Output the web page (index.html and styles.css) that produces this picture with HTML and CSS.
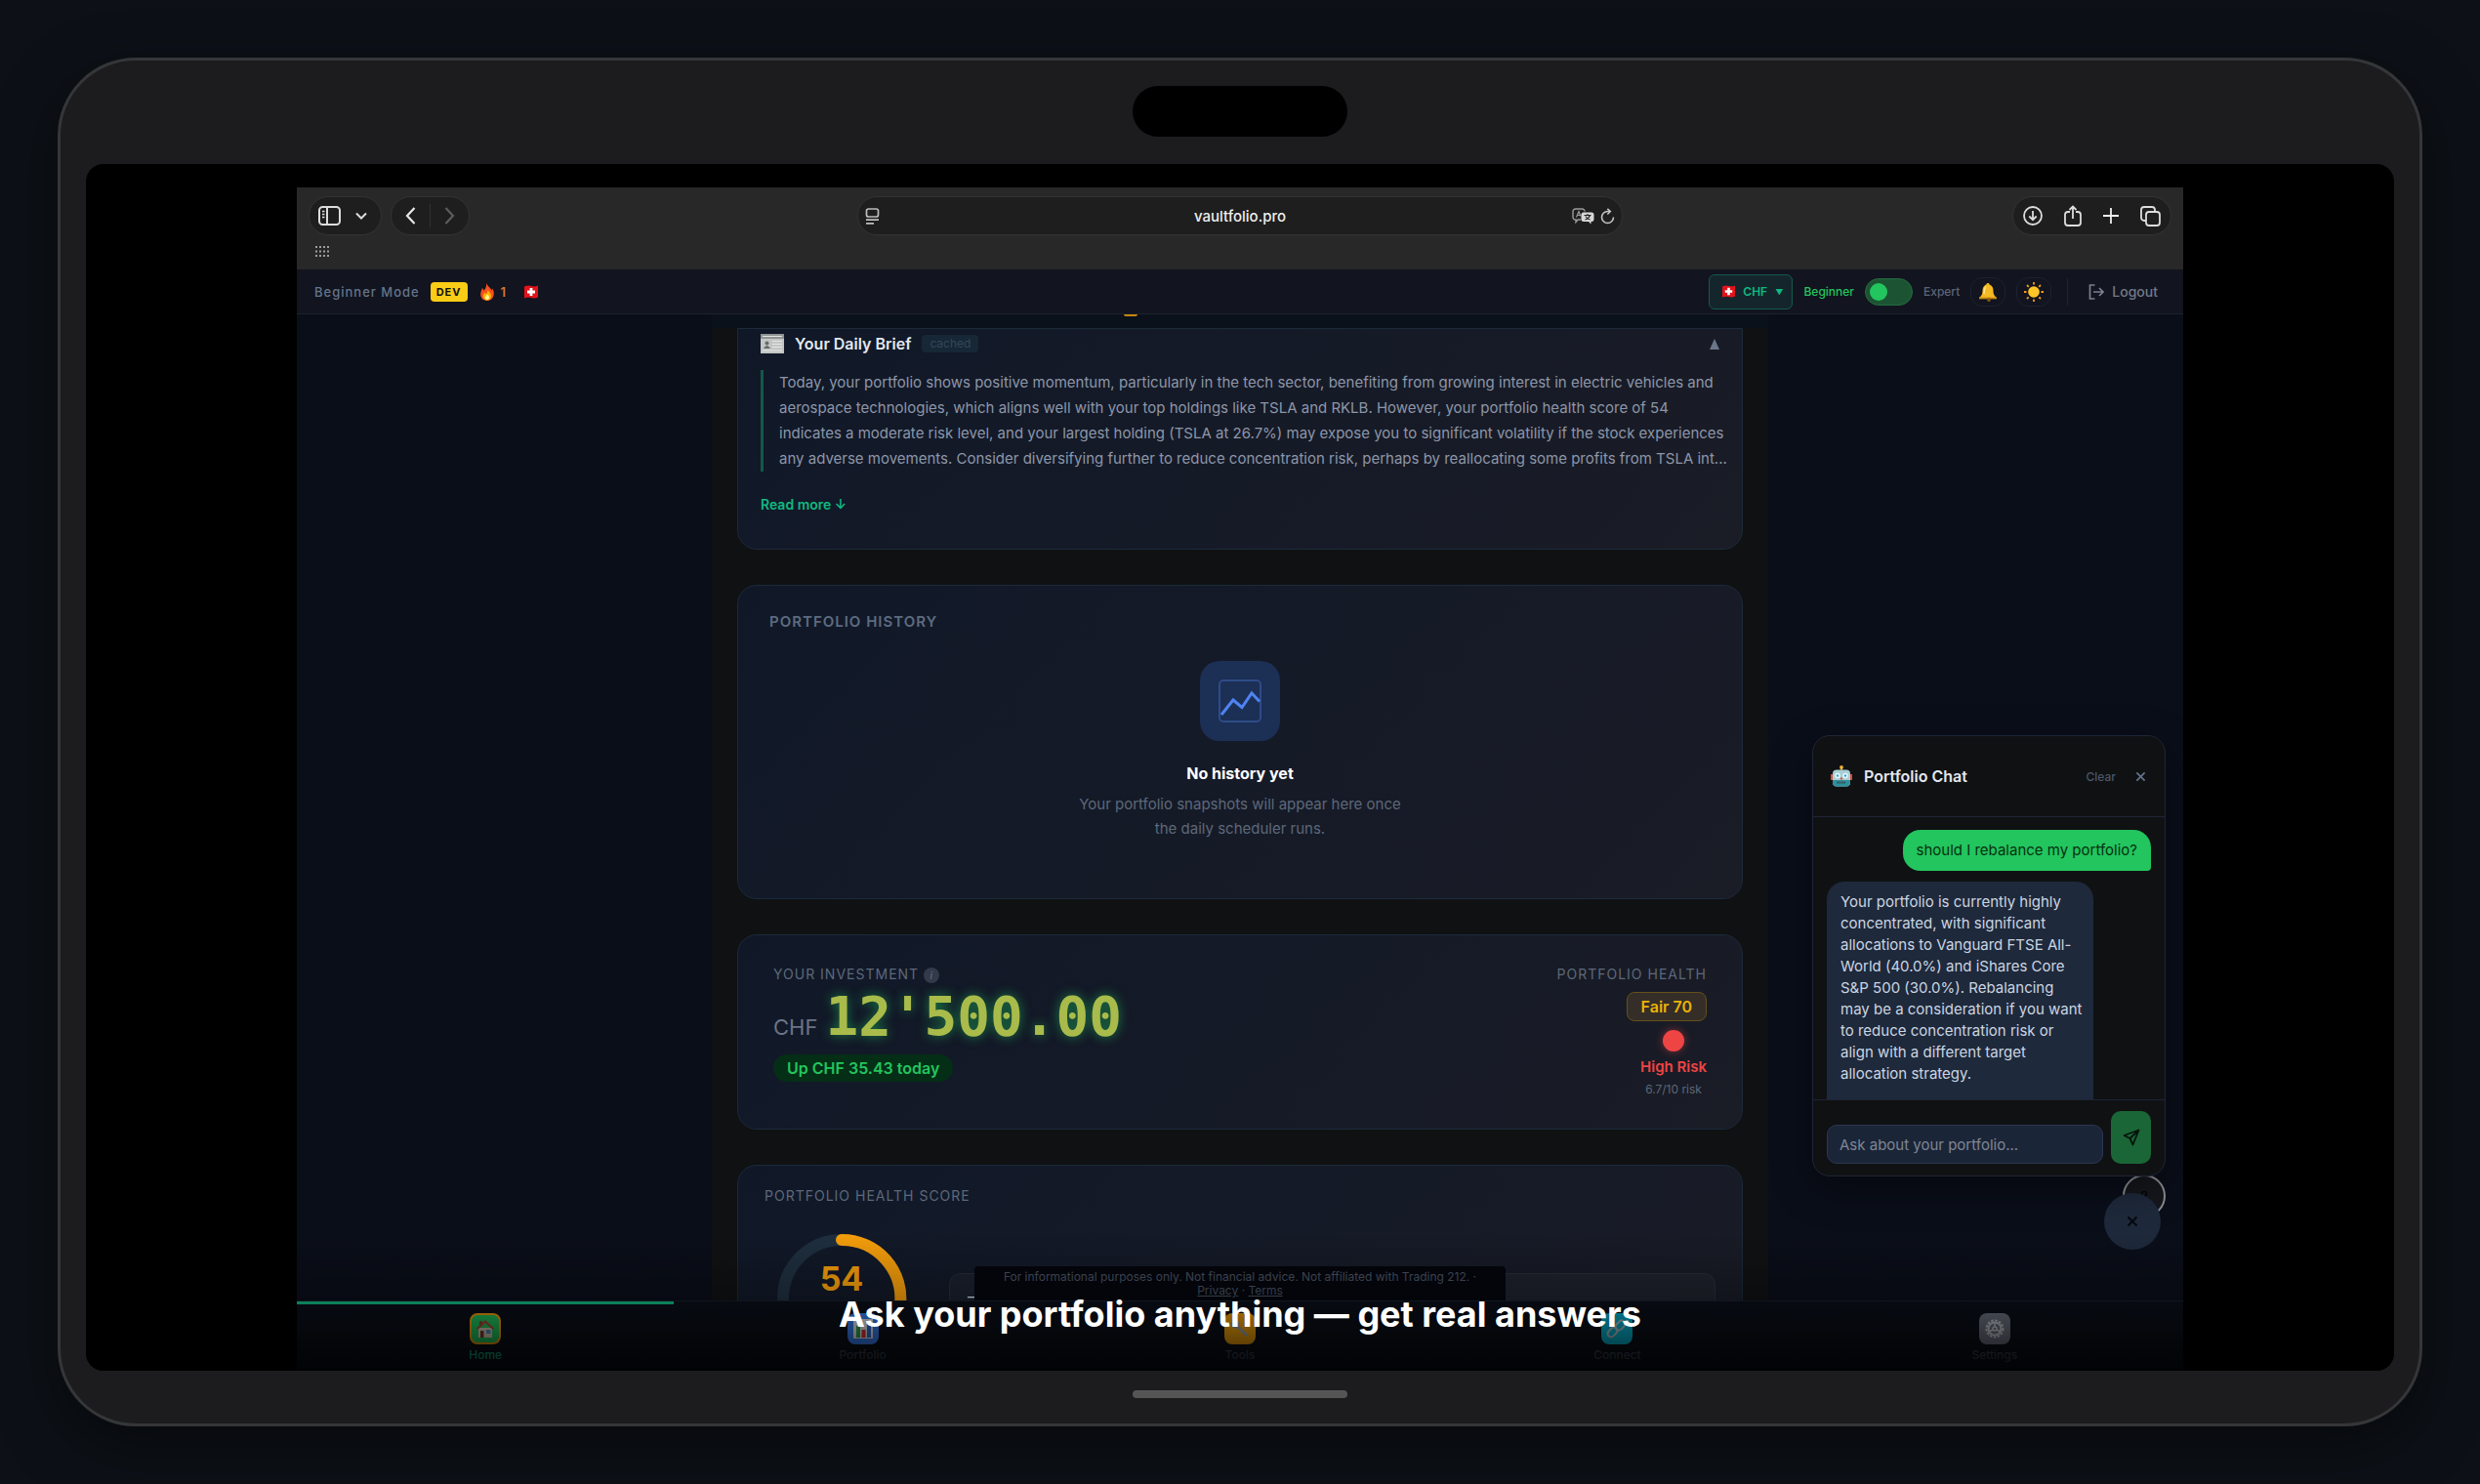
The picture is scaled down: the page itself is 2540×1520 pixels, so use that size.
FILE: index.html
```html
<!DOCTYPE html>
<html lang="en">
<head>
    <meta charset="UTF-8">
    <title>Vaultfolio</title>
    <link rel="stylesheet" href="styles.css">
</head>
<body>
    <!-- shared drawings -->
    <svg class="defs" width="0" height="0" aria-hidden="true">
        <symbol id="flag" viewBox="0 0 14 14">
            <path d="M0 1.5 Q3.5 0 7 1 T14 0.5 V12.5 Q10.5 14 7 13 T0 13.5Z" fill="#e3121b"/>
            <path d="M5.6 3h2.8v2.6H11v2.8H8.4V11H5.6V8.4H3V5.6h2.6z" fill="#fff"/>
        </symbol>
        <symbol id="cross" viewBox="0 0 12 12">
            <path d="M1.5 1.5l9 9M10.5 1.5l-9 9" fill="none" stroke="currentColor" stroke-width="1.8"/>
        </symbol>
    </svg>

    <div class="device">
        <div class="notch"></div>
        <div class="screen">
            <div class="app">

                <div class="chrome">
                    <div class="toolbar">
                        <div class="tools">
                            <div class="pill">
                                <button aria-label="Sidebar"><svg width="24" height="20" viewBox="0 0 24 20" fill="none" stroke="#dcdcdc" stroke-width="2"><rect x="1" y="1" width="21" height="18" rx="3.5"/><path d="M9 1v18"/><path d="M4 5.500h2.500M4 8.500h2.500M4 11.500h2.500" stroke-width="1.300"/></svg></button>
                                <button aria-label="Tab groups"><svg width="12" height="8" viewBox="0 0 12 8" fill="none" stroke="#dcdcdc" stroke-width="2"><path d="M1 1.500l5 5 5-5"/></svg></button>
                            </div>
                            <div class="pill">
                                <button aria-label="Back"><svg width="11" height="18" viewBox="0 0 11 18" fill="none" stroke="#e6e6e6" stroke-width="2.200"><path d="M9.500 1L2 9l7.500 8"/></svg></button>
                                <i class="line"></i>
                                <button aria-label="Forward"><svg width="11" height="18" viewBox="0 0 11 18" fill="none" stroke="#5c5c5c" stroke-width="2.200"><path d="M1.500 1L9 9l-7.500 8"/></svg></button>
                            </div>
                        </div>
                        <div class="url">
                            <svg width="15" height="17" viewBox="0 0 15 17" fill="none" stroke="#bdbdbd" stroke-width="1.700"><rect x="1.500" y="1" width="12" height="8" rx="2"/><path d="M1 12.200h13M1 15.900h8"/></svg>
                            <span>vaultfolio.pro</span>
                            <div class="url-end">
                                <svg width="23" height="17" viewBox="0 0 23 17"><path d="M9 12H6l-2 2.500V12H3.500A2.500 2.500 0 0 1 1 9.500v-6A2.500 2.500 0 0 1 3.500 1h7A2.500 2.500 0 0 1 13 3.500" fill="none" stroke="#9a9a9a" stroke-width="1.400"/><path d="M4.500 9.500L7 3.500l2 5M5.500 7.500h3" fill="none" stroke="#9a9a9a" stroke-width="1.200"/><path d="M12 4.500h8a2.500 2.500 0 0 1 2.500 2.500v4.500a2.500 2.500 0 0 1-2.500 2.500h-.5V16.500L17 14h-5a2.500 2.500 0 0 1-2.500-2.500V7A2.500 2.500 0 0 1 12 4.500z" fill="#d8d8d8"/><path d="M12.500 7.500h7M16 6v1.500M18.500 7.500q-1 3-5 4.500M13.800 8.500q1.500 2.500 4.700 3.500" fill="none" stroke="#222" stroke-width="1.100"/></svg>
                                <svg width="15" height="17" viewBox="0 0 15 17" fill="none" stroke="#c4c4c4" stroke-width="1.600"><path d="M13.500 9.500A6 6 0 1 1 7.500 3.500H10"/><path d="M7.300 .8L10.300 3.500 7.300 6.500"/></svg>
                            </div>
                        </div>
                        <div class="tools end">
                            <div class="pill wide">
                                <button aria-label="Downloads"><svg width="20" height="20" viewBox="0 0 20 20" fill="none" stroke="#dcdcdc" stroke-width="1.800"><circle cx="10" cy="10" r="9"/><path d="M10 5v9M6.300 10.500L10 14.200l3.700-3.700"/></svg></button>
                                <button aria-label="Share"><svg width="18" height="22" viewBox="0 0 18 22" fill="none" stroke="#dcdcdc" stroke-width="1.800"><path d="M6 7H4a3 3 0 0 0-3 3v8a3 3 0 0 0 3 3h10a3 3 0 0 0 3-3v-8a3 3 0 0 0-3-3h-2M9 14V1.500M5.500 5L9 1.500 12.500 5"/></svg></button>
                                <button aria-label="New tab"><svg width="16" height="16" viewBox="0 0 16 16" fill="none" stroke="#f0f0f0" stroke-width="1.800"><path d="M8 0v16M0 8h16"/></svg></button>
                                <button aria-label="Tabs"><svg width="21" height="21" viewBox="0 0 21 21" fill="none" stroke="#dcdcdc" stroke-width="1.800"><rect x="6" y="6" width="14" height="14" rx="3"/><path d="M6 15H4a3 3 0 0 1-3-3V4a3 3 0 0 1 3-3h8a3 3 0 0 1 3 3v2"/></svg></button>
                            </div>
                        </div>
                    </div>
                    <div class="favorites">
                        <svg width="14" height="11" viewBox="0 0 14 11" stroke="#9d9d9d" stroke-width="2" stroke-dasharray="2 2"><path d="M0 1h14M0 5.500h14M0 10h14"/></svg>
                    </div>
                </div>

                <header class="topbar">
                    <div class="group">
                        <span class="mode">Beginner Mode</span>
                        <span class="dev">DEV</span>
                        <span class="streak">
                            <svg width="14" height="18" viewBox="0 0 14 18"><path d="M6 0c1 3 5 5 5.500 7.500.6-.7.700-1.500.600-2.300C14 8 14 10 13.700 12 13 15.700 10.500 18 7 18s-6.500-2.300-6.800-6C0 9 1.500 7 2 5c.9.8 1.300 1.800 1.300 2.700C5.500 6 6.500 3 6 0z" fill="#f4511e"/><path d="M7.500 6c.4 2.500 3.500 4 3.500 7 0 3-2 4.500-4 4.500S2.800 16 2.800 13.500C2.800 11.500 4 11 4.300 9.500c.7.400 1.200 1 1.300 1.700C7 10 7.800 8 7.500 6z" fill="#ffb300"/><path d="M7 11.500c1.500 1 2 2 2 3.200S8.200 17 7 17s-2.200-.9-2.200-2.200S6.500 12.800 7 11.500z" fill="#fff59d"/></svg>
                            1
                        </span>
                        <svg width="14" height="14"><use href="#flag"/></svg>
                    </div>
                    <div class="group right">
                        <button class="currency"><svg width="13" height="13"><use href="#flag"/></svg><span>CHF</span><small>▼</small></button>
                        <span class="on">Beginner</span>
                        <input type="checkbox" class="switch" aria-label="Expert mode">
                        <span class="off">Expert</span>
                        <button class="round" aria-label="Alerts"><svg width="20" height="20" viewBox="0 0 20 20"><path d="M10 1c1 0 1.600.7 1.600 1.600C14.500 3.500 15.500 6 15.500 9c0 3.500 1 5 3.500 7H1c2.500-2 3.500-3.500 3.500-7 0-3 1-5.500 3.900-6.400C8.400 1.700 9 1 10 1z" fill="#f5b921"/><path d="M8 4.500C6.500 6 6.300 9 6 12" stroke="#ffe68a" stroke-width="1.500" fill="none"/><path d="M1 15.500h18v1.800H1z" fill="#c98a12"/><circle cx="11" cy="18" r="1.900" fill="#8a5a0b"/></svg></button>
                        <button class="round" aria-label="Theme"><svg width="20" height="20" viewBox="0 0 20 20"><path d="M10 0v20M0 10h20M3 3l14 14M17 3L3 17" stroke="#f59b16" stroke-width="1.800" stroke-dasharray="2.500 15 2.500"/><circle cx="10" cy="10" r="5.800" fill="#ffc526"/></svg></button>
                        <i class="divider"></i>
                        <button class="logout"><svg width="16" height="16" viewBox="0 0 16 16" fill="none" stroke="#7b8090" stroke-width="1.700"><path d="M6.500 1H1.500v14h5M5 8h10M11 4l4 4-4 4"/></svg>Logout</button>
                    </div>
                </header>

                <main class="content">
                    <div class="column">
                        <div class="strip"><i></i></div>

                        <section class="card brief">
                            <div class="brief-head">
                                <svg width="24" height="20" viewBox="0 0 24 20"><rect width="24" height="20" fill="#c3c5c4"/><rect width="24" height="5" fill="#8f9392"/><path d="M2 2.500h20M12 7.500h10M12 10.500h10M12 13.500h10M2 17h20" stroke="#e4e6e5" stroke-width="1.200"/><circle cx="6.500" cy="9.500" r="2" fill="#666b6a"/><path d="M3 15q3.500-6 7 0z" fill="#666b6a"/></svg>
                                <h2>Your Daily Brief</h2>
                                <span class="cached">cached</span>
                                <button class="fold" aria-label="Collapse"><svg width="10" height="11" viewBox="0 0 10 11"><path d="M5 0l5 11H0z" fill="#6b7689"/></svg></button>
                            </div>
                            <blockquote>Today, your portfolio shows positive momentum, particularly in the tech sector, benefiting from growing interest in electric vehicles and<br>aerospace technologies, which aligns well with your top holdings like TSLA and RKLB. However, your portfolio health score of 54<br>indicates a moderate risk level, and your largest holding (TSLA at 26.7%) may expose you to significant volatility if the stock experiences<br>any adverse movements. Consider diversifying further to reduce concentration risk, perhaps by reallocating some profits from TSLA int...</blockquote>
                            <button class="more">Read more ↓</button>
                        </section>

                        <section class="card history">
                            <h3>PORTFOLIO HISTORY</h3>
                            <div class="empty">
                                <div class="empty-icon">
                                    <svg width="44" height="44" viewBox="0 0 44 44" fill="none"><rect x="1" y="1" width="42" height="42" rx="4" stroke="#2d4c86" stroke-width="2"/><path d="M3 36L15 21l9 7.500L34 14l8 8.500" stroke="#4f83f1" stroke-width="3"/></svg>
                                </div>
                                <h4>No history yet</h4>
                                <p>Your portfolio snapshots will appear here once<br>the daily scheduler runs.</p>
                            </div>
                        </section>

                        <section class="card invest">
                            <div>
                                <div class="label">YOUR INVESTMENT <span class="info">i</span></div>
                                <div class="amount"><span>CHF</span><b>12'500.00</b></div>
                                <span class="gain">Up CHF 35.43 today</span>
                            </div>
                            <div class="health">
                                <div class="label">PORTFOLIO HEALTH</div>
                                <span class="fair">Fair 70</span>
                                <div class="risk">
                                    <i></i>
                                    <b>High Risk</b>
                                    <small>6.7/10 risk</small>
                                </div>
                            </div>
                        </section>

                        <section class="card score">
                            <div class="label">PORTFOLIO HEALTH SCORE</div>
                            <div class="score-row">
                                <div class="gauge">
                                    <svg width="134" height="134" viewBox="0 0 134 134" fill="none" stroke-width="12"><circle cx="67" cy="67" r="60" stroke="#1f2f3f"/><path d="M67 7a60 60 0 1 1-15 118" stroke="#f59e0b" stroke-linecap="round"/></svg>
                                    <b>54</b>
                                </div>
                                <div class="score-box">—</div>
                            </div>
                        </section>
                    </div>
                </main>

                <nav class="tabs">
                    <a href="#" class="tab active">
                        <span class="tab-icon home"><svg width="20" height="20" viewBox="0 0 20 20"><path d="M3 9h14v10H3z" fill="#d8cbb4"/><path d="M4 2h3v5H4z" fill="#8b4a35"/><path d="M10 1L1 9.500l1.500 1.300L10 4l7.500 6.800L19 9.500z" fill="#b8452f"/><path d="M5 12h3.500v7H5z" fill="#7a3d2c"/><path d="M11 11h4.500v4H11z" fill="#5a8fc8"/></svg></span>
                        Home
                    </a>
                    <a href="#" class="tab">
                        <span class="tab-icon chart"><svg width="20" height="20" viewBox="0 0 20 20"><path d="M0 0h20v20H0z" fill="#e8ecf2"/><path d="M3 7h4v12H3z" fill="#2eab4a"/><path d="M8.500 11h4v8h-4z" fill="#e03131"/><path d="M14 3h4v16h-4z" fill="#2f6bdf"/></svg></span>
                        Portfolio
                    </a>
                    <a href="#" class="tab">
                        <span class="tab-icon tool"><svg width="20" height="20" viewBox="0 0 20 20" fill="none"><path d="M5 5l12 12" stroke="#9aa4b4" stroke-width="3"/><path d="M1.500 4A4 4 0 0 0 8 7.500M4 1.500A4 4 0 0 1 8 7" stroke="#9aa4b4" stroke-width="2.400"/></svg></span>
                        Tools
                    </a>
                    <a href="#" class="tab">
                        <span class="tab-icon link"><svg width="22" height="22" viewBox="0 0 22 22" fill="none" stroke="#b9c4cc" stroke-width="2"><rect x="1" y="11" width="11" height="7" rx="3.500" transform="rotate(-45 6.500 14.500)"/><rect x="9" y="4" width="11" height="7" rx="3.500" transform="rotate(-45 14.500 7.500)"/></svg></span>
                        Connect
                    </a>
                    <a href="#" class="tab">
                        <span class="tab-icon gear"><svg width="20" height="20" viewBox="0 0 20 20" fill="none" stroke="#c3c8d0"><circle cx="10" cy="10" r="8.500" stroke-width="2" stroke-dasharray="2.500 1.500"/><circle cx="10" cy="10" r="6.500" stroke-width="2"/><circle cx="10" cy="10" r="2" stroke-width="1.500"/><path d="M10 8V4M8 11l-4 2M12 11l4 2" stroke-width="1.500"/></svg></span>
                        Settings
                    </a>
                </nav>

                <p class="disclaimer">For informational purposes only. Not financial advice. Not affiliated with Trading 212. ·<br><a href="#">Privacy</a> · <a href="#">Terms</a></p>

                <button class="help" aria-label="Help">?</button>
                <button class="fab" aria-label="Close chat"><svg width="12" height="12"><use href="#cross"/></svg></button>

                <aside class="chat">
                    <div class="chat-head">
                        <svg width="22" height="22" viewBox="0 0 22 22"><path d="M10.200 2h1.600v4h-1.600z" fill="#c9a227"/><circle cx="11" cy="2" r="1.900" fill="#f2b632"/><path d="M0 9h2v6H0zM20 9h2v6h-2z" fill="#d94b3c"/><rect x="2" y="4.500" width="18" height="17" rx="4" fill="#a9cfd6"/><path d="M2 15h18v3a4 4 0 0 1-4 3.500H6A4 4 0 0 1 2 18z" fill="#2f8f9a"/><circle cx="7" cy="10.500" r="2.700" fill="#e9fbff"/><circle cx="15" cy="10.500" r="2.700" fill="#e9fbff"/><circle cx="7" cy="10.500" r="1.200" fill="#3aa0c9"/><circle cx="15" cy="10.500" r="1.200" fill="#3aa0c9"/><path d="M11 11.500l1.500 3h-3z" fill="#d94b3c"/><path d="M6.500 17.500h9" stroke="#36474f" stroke-width="2" stroke-dasharray="1.500 .8"/></svg>
                        <h2>Portfolio Chat</h2>
                        <button class="clear">Clear</button>
                        <button class="close" aria-label="Close"><svg width="11" height="11"><use href="#cross"/></svg></button>
                    </div>
                    <div class="messages">
                        <p class="msg me">should I rebalance my portfolio?</p>
                        <p class="msg bot">Your portfolio is currently highly<br>concentrated, with significant<br>allocations to Vanguard FTSE All-<br>World (40.0%) and iShares Core<br>S&amp;P 500 (30.0%). Rebalancing<br>may be a consideration if you want<br>to reduce concentration risk or<br>align with a different target<br>allocation strategy.</p>
                    </div>
                    <form class="ask">
                        <input type="text" placeholder="Ask about your portfolio..." aria-label="Ask about your portfolio">
                        <button type="button" aria-label="Send"><svg width="18" height="18" viewBox="0 0 18 18" fill="none" stroke="#07140c" stroke-width="1.800" stroke-linejoin="round"><path d="M16.500 1.500L1.500 7l6 3 3 6.500zM16.500 1.500L7.500 10"/></svg></button>
                    </form>
                </aside>
            </div>

            <div class="caption">Ask your portfolio anything — get real answers</div>
        </div>
        <div class="homebar"></div>
    </div>
</body>
</html>
```
FILE: styles.css
```css
* {
    margin: 0;
    padding: 0;
    box-sizing: border-box;
}
body {
    display: flex;
    height: 100vh;
    padding: 59px;
    background: #0d1117;
    font-family: Inter, "Liberation Sans", sans-serif;
    font-size: 14px;
    color: #e2e8f0;
}
svg {
    display: block;
    flex: none;
}
.defs {
    position: absolute;
}
button {
    display: flex;
    align-items: center;
    justify-content: center;
    background: none;
    border: none;
    color: inherit;
    font: inherit;
    cursor: pointer;
}

/* tablet frame */
.device {
    position: relative;
    flex: 1;
    display: flex;
    min-width: 0;
    padding: 106px 26px 54px;
    border: 3px solid #353638;
    border-radius: 80px;
    background: #1c1c1e;
    box-shadow: 0 20px 60px rgba(0,0,0,.5);
}
.notch {
    position: absolute;
    top: 26px;
    left: 50%;
    width: 220px;
    height: 52px;
    margin-left: -110px;
    border-radius: 26px;
    background: #000;
}
.homebar {
    position: absolute;
    bottom: 26px;
    left: 50%;
    width: 220px;
    height: 8px;
    margin-left: -110px;
    border-radius: 4px;
    background: #555;
}
.screen {
    position: relative;
    flex: 1;
    display: flex;
    min-width: 0;
    padding: 24px 216px 0;
    border-radius: 18px;
    background: #000;
    overflow: hidden;
}
.app {
    position: relative;
    flex: 1;
    display: flex;
    flex-direction: column;
    min-width: 0;
    background: #0a0e19;
}

/* browser */
.chrome {
    height: 84px;
    padding: 9px 12px 0;
    background: #282828;
}
.toolbar {
    display: grid;
    grid-template-columns: 1fr minmax(0, 784px) 1fr;
    align-items: center;
}
.tools {
    display: flex;
    gap: 9px;
}
.end {
    justify-content: flex-end;
}
.pill, .url {
    display: flex;
    align-items: center;
    height: 40px;
    border: 1px solid #333;
    border-radius: 20px;
    background: #1e1e1e;
}
.pill {
    gap: 14px;
    padding: 0 14px 0 9px;
}
.pill + .pill {
    padding: 0 14px;
}
.pill.wide {
    gap: 22px;
    padding: 0 10px;
}
.line {
    width: 1px;
    height: 24px;
    background: #333;
}
.url {
    justify-content: space-between;
    padding: 0 7px;
    font-size: 15px;
    font-weight: 500;
    color: #eee;
}
.url > svg {
    margin-right: 29px;
}
.url-end {
    display: flex;
    gap: 6px;
}
.favorites {
    padding: 11px 7px;
}

/* app header */
.topbar {
    display: flex;
    align-items: center;
    justify-content: space-between;
    height: 46px;
    padding: 0 26px 0 18px;
    border-bottom: 1px solid #1c222c;
    background: #12141f;
}
.group {
    display: flex;
    align-items: center;
    gap: 11px;
}
.mode {
    color: #64748b;
    font-size: 13px;
    font-weight: 500;
    letter-spacing: 1px;
}
.dev {
    padding: 0 6px;
    border-radius: 4px;
    background: #facc15;
    color: #111;
    font-size: 11px;
    font-weight: 700;
    line-height: 20px;
    letter-spacing: 1px;
}
.streak {
    display: flex;
    align-items: center;
    gap: 7px;
    margin: 0 8px 0 2px;
    color: #d9772b;
    font-size: 13px;
    font-weight: 600;
}
.right {
    font-size: 12px;
}
.currency {
    gap: 8px;
    height: 36px;
    padding: 0 9px 0 13px;
    border: 1px solid #14594b;
    border-radius: 6px;
    background: #14262b;
    color: #10b981;
    font-weight: 600;
}
.currency small {
    font-size: 8px;
}
.on {
    color: #22c55e;
    font-weight: 500;
}
.off {
    color: #5b6577;
    font-weight: 500;
}
.switch {
    appearance: none;
    width: 49px;
    height: 28px;
    padding: 4px;
    border: 1px solid #246b40;
    border-radius: 14px;
    background: #1c5433;
}
.switch::before {
    content: "";
    display: block;
    width: 18px;
    height: 18px;
    border-radius: 50%;
    background: #22c55e;
}
.round {
    width: 36px;
    height: 30px;
    border: 1px solid #1c2230;
    border-radius: 12px;
}
.divider {
    width: 1px;
    height: 28px;
    margin: 0 10px 0 5px;
    background: #1f2430;
}
.logout {
    gap: 8px;
    color: #737a8a;
    font-size: 14px;
    font-weight: 500;
}

/* page */
.content {
    flex: 1;
    min-height: 0;
    overflow: hidden;
}
.column {
    max-width: 1082px;
    min-height: 100%;
    margin: 0 auto;
    padding: 0 26px;
    background: #101113;
}
.strip {
    height: 14px;
    margin: 0 -26px;
    padding-left: 41%;
    background: #0b111b;
}
.strip i {
    display: block;
    width: 14px;
    height: 2px;
    border-radius: 0 0 7px 7px;
    background: #c9850f;
}
.card {
    margin-bottom: 36px;
    border: 1px solid #1b2a3a;
    border-radius: 20px;
    background: linear-gradient(135deg, #101828, #1a1c26);
}
.brief {
    height: 227px;
    padding: 3px 23px;
    border-radius: 0 0 20px 20px;
}
.brief-head {
    display: flex;
    align-items: center;
    gap: 11px;
    height: 24px;
}
.brief-head h2, .chat h2 {
    font-size: 16px;
    font-weight: 600;
}
.cached {
    padding: 0 8px;
    border-radius: 4px;
    background: #172735;
    color: #34485a;
    font-size: 12px;
    line-height: 18px;
}
.fold {
    margin-left: auto;
}
.brief blockquote {
    margin: 15px 0 21px;
    padding-left: 16px;
    border-left: 3px solid #12594b;
    color: #8d96a8;
    font-size: 15px;
    line-height: 26px;
    white-space: nowrap;
}
.more {
    color: #10b981;
    font-size: 14px;
    font-weight: 600;
    line-height: 26px;
}
.history {
    height: 322px;
    padding: 26px 32px;
}
.history h3 {
    color: #5d6b80;
    font-size: 15px;
    font-weight: 600;
    line-height: 22px;
    letter-spacing: 1px;
}
.empty {
    display: flex;
    flex-direction: column;
    align-items: center;
    margin-top: 29px;
    text-align: center;
}
.empty-icon {
    display: flex;
    align-items: center;
    justify-content: center;
    width: 82px;
    height: 82px;
    margin-bottom: 20px;
    border-radius: 20px;
    background: #1c2f55;
}
.empty h4 {
    color: #fff;
    font-size: 16px;
    font-weight: 700;
    line-height: 26px;
    margin-bottom: 6px;
}
.empty p {
    color: #5d6879;
    font-size: 15px;
    line-height: 25px;
}
.label {
    color: #5d6879;
    font-size: 14px;
    line-height: 20px;
    letter-spacing: 1px;
}
.invest {
    display: flex;
    justify-content: space-between;
    height: 200px;
    padding: 30px 36px;
}
.info {
    display: inline-block;
    width: 16px;
    height: 16px;
    border-radius: 50%;
    background: #333a49;
    color: #6b7486;
    font-size: 10px;
    font-style: italic;
    line-height: 16px;
    text-align: center;
}
.amount {
    display: flex;
    align-items: baseline;
    gap: 8px;
    height: 72px;
    line-height: 66px;
}
.amount span {
    color: #6b7486;
    font-size: 22px;
}
.amount b {
    color: #a9bb4a;
    font-family: "DejaVu Sans Mono", "Liberation Mono", monospace;
    font-size: 56px;
    text-shadow: 0 0 12px rgba(34,197,94,.6);
}
.gain {
    display: inline-block;
    padding: 0 14px;
    border-radius: 14px;
    background: #052e16;
    color: #22c55e;
    font-size: 16px;
    font-weight: 600;
    line-height: 28px;
}
.health {
    display: flex;
    flex-direction: column;
    align-items: flex-end;
}
.fair {
    margin: 8px 0 9px;
    padding: 0 14px;
    border: 1px solid #66501a;
    border-radius: 8px;
    background: #352e28;
    color: #eab308;
    font-size: 16px;
    font-weight: 600;
    line-height: 28px;
}
.risk {
    display: flex;
    flex-direction: column;
    align-items: center;
    gap: 6px;
}
.risk i {
    width: 22px;
    height: 22px;
    border-radius: 50%;
    background: #ef4444;
    box-shadow: 0 0 8px rgba(239,68,68,.5);
}
.risk b {
    color: #ef4444;
    font-size: 15px;
    font-weight: 600;
    line-height: 20px;
}
.risk small {
    color: #5d6879;
    font-size: 12px;
    line-height: 14px;
}
.score {
    height: 300px;
    padding: 21px 27px;
}
.score-row {
    display: flex;
    gap: 43px;
    padding-left: 12px;
    margin-top: 28px;
}
.gauge {
    position: relative;
}
.gauge b {
    position: absolute;
    top: 26px;
    left: 0;
    width: 134px;
    color: #f59e0b;
    font-size: 34px;
    line-height: 42px;
    text-align: center;
}
.score-box {
    flex: 1;
    height: 120px;
    margin-top: 41px;
    padding: 14px 18px;
    border: 1px solid rgba(255,255,255,.05);
    border-radius: 12px;
    background: rgba(255,255,255,.03);
}

/* bottom navigation */
.tabs {
    display: flex;
    height: 72px;
    border-top: 1px solid #17202c;
    background: #0a0f18;
}
.tab {
    flex: 1;
    display: flex;
    flex-direction: column;
    align-items: center;
    gap: 3px;
    padding-top: 9px;
    border-top: 3px solid transparent;
    color: #3c4656;
    font-size: 12px;
    font-weight: 500;
    text-decoration: none;
}
.active {
    border-color: #12b981;
    color: #10b981;
}
.tab-icon {
    display: flex;
    align-items: center;
    justify-content: center;
    width: 32px;
    height: 32px;
    border-radius: 8px;
}
.home { background: #22c55e; border: 2px solid #f59e0b; }
.chart { background: #3b82f6; }
.tool { background: #f5a30b; }
.link { background: #06b6d4; }
.gear { background: #6b7280; }

.disclaimer {
    position: absolute;
    bottom: 72px;
    left: 50%;
    width: 544px;
    margin-left: -272px;
    padding: 4px 20px 3px;
    border-radius: 4px 4px 0 0;
    background: #04060d;
    color: #475060;
    font-size: 12px;
    line-height: 14px;
    text-align: center;
}
.disclaimer a {
    color: #475060;
}

/* chat */
.help, .fab {
    position: absolute;
    border-radius: 50%;
}
.help {
    right: 18px;
    bottom: 157px;
    width: 44px;
    height: 44px;
    border: 2px solid #8b8d91;
    background: #15171c;
    color: #000;
}
.fab {
    right: 23px;
    bottom: 124px;
    width: 58px;
    height: 58px;
    background: #1e293b;
    color: #05080d;
}
.chat {
    position: absolute;
    right: 18px;
    bottom: 199px;
    display: flex;
    flex-direction: column;
    width: 362px;
    height: 452px;
    border: 1px solid #1e2536;
    border-radius: 18px;
    background: #101113;
    box-shadow: 0 12px 40px rgba(0,0,0,.4);
}
.chat-head {
    display: flex;
    align-items: center;
    gap: 12px;
    height: 83px;
    padding: 0 19px 0 18px;
    border-bottom: 1px solid #1e2536;
}
.clear {
    margin: 0 8px 0 auto;
    color: #4b566b;
    font-size: 12px;
    font-weight: 500;
}
.close {
    color: #64748b;
}
.messages {
    flex: 1;
    display: flex;
    flex-direction: column;
    gap: 11px;
    min-height: 0;
    padding: 13px 14px 0;
    overflow: hidden;
}
.msg {
    flex: none;
    padding: 10px 14px;
    border-radius: 18px;
    font-size: 15px;
    line-height: 22px;
}
.me {
    align-self: flex-end;
    border-bottom-right-radius: 4px;
    background: #22c55e;
    color: #05310f;
}
.bot {
    width: 273px;
    padding-bottom: 40px;
    background: #1e293b;
    color: #cbd5e1;
    white-space: nowrap;
}
.ask {
    display: flex;
    align-items: flex-end;
    gap: 8px;
    padding: 11px 14px 12px;
    border-top: 1px solid #1e2536;
}
.ask input {
    flex: 1;
    min-width: 0;
    height: 40px;
    padding: 0 12px;
    border: 1px solid #2b3750;
    border-radius: 10px;
    background: #1b2538;
    color: #cbd5e1;
    font: inherit;
    font-size: 15px;
}
.ask input::placeholder {
    color: #7e8592;
}
.ask button {
    width: 41px;
    height: 54px;
    border-radius: 10px;
    background: #1a6636;
}

/* caption over the recording */
.caption {
    position: absolute;
    left: 0;
    right: 0;
    bottom: 0;
    padding: 60px 40px 34px;
    background: linear-gradient(transparent, rgba(0,0,0,.25) 45%, rgba(0,0,0,.8));
    color: #fff;
    font-size: 36px;
    font-weight: 700;
    line-height: 48px;
    text-align: center;
    pointer-events: none;
}
```
